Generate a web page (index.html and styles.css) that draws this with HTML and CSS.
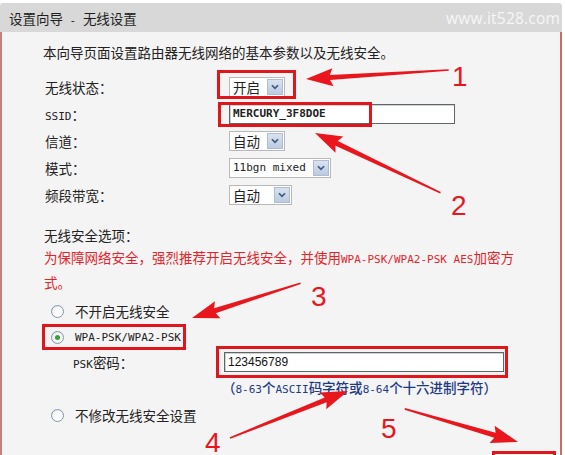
FILE: index.html
```html
<!DOCTYPE html>
<html lang="zh-CN">
<head>
  <meta charset="UTF-8">
  <meta name="viewport" content="width=device-width, initial-scale=1.0">
  <title>设置向导 - 无线设置</title>
  <link rel="stylesheet" href="styles.css">
</head>
<body>
  <div class="page">
    <div class="panel-head">
      <span class="title">设置向导<span class="en"> - </span>无线设置</span>
      <span class="mark">www.it528.com</span>
    </div>

    <div class="panel-body">
      <p class="intro">本向导页面设置路由器无线网络的基本参数以及无线安全。</p>

      <div class="rows">
        <div class="row">
          <span class="label">无线状态：</span>
          <div class="select w-state"><span class="val">开启</span><span class="btn"><svg viewBox="0 0 16 16"><polyline points="4.5,6 8,9.5 11.5,6"/></svg></span></div>
        </div>
        <div class="row">
          <span class="label"><span class="en">SSID</span>：</span>
          <div class="text-input w-ssid"><span class="en bold">MERCURY_3F8DOE</span></div>
        </div>
        <div class="row">
          <span class="label">信道：</span>
          <div class="select w-state"><span class="val">自动</span><span class="btn"><svg viewBox="0 0 16 16"><polyline points="4.5,6 8,9.5 11.5,6"/></svg></span></div>
        </div>
        <div class="row">
          <span class="label">模式：</span>
          <div class="select w-mode"><span class="val en">11bgn mixed</span><span class="btn"><svg viewBox="0 0 16 16"><polyline points="4.5,6 8,9.5 11.5,6"/></svg></span></div>
        </div>
        <div class="row">
          <span class="label">频段带宽：</span>
          <div class="select w-band"><span class="val">自动</span><span class="btn"><svg viewBox="0 0 16 16"><polyline points="4.5,6 8,9.5 11.5,6"/></svg></span></div>
        </div>
      </div>

      <p class="section">无线安全选项：</p>
      <p class="warn">为保障网络安全，强烈推荐开启无线安全，并使用<span class="en">WPA-PSK/WPA2-PSK AES</span>加密方式。</p>

      <div class="radio-row first"><span class="radio"></span>不开启无线安全</div>
      <div class="radio-row"><span class="radio checked"></span><span class="en">WPA-PSK/WPA2-PSK</span></div>
      <div class="psk-row">
        <span class="psk-label"><span class="en">PSK</span>密码：</span>
        <div class="text-input w-psk"><span class="num">123456789</span></div>
      </div>
      <p class="hint">（<span class="en">8-63</span>个<span class="en">ASCII</span>码字符或<span class="en">8-64</span>个十六进制字符）</p>
      <div class="radio-row last"><span class="radio"></span>不修改无线安全设置</div>
    </div>

    <!-- red marks drawn over the screenshot -->
    <svg class="marks" width="565" height="455" viewBox="0 0 565 455">
      <g class="boxes">
        <rect x="218.5" y="71.5" width="76" height="26"/>
        <rect x="219.5" y="103.5" width="151" height="22"/>
        <rect x="43.5" y="325.5" width="141" height="23"/>
        <rect x="217.5" y="347.5" width="289" height="29"/>
        <rect x="493.5" y="452.5" width="61" height="12"/>
      </g>
      <g class="arrows">
        <polygon transform="translate(306 79) rotate(-3.6)" points="0,0 27,-9 24,-2.6 143,-0.8 143,0.8 24,2.6 27,9"/>
        <polygon transform="translate(315 133) rotate(25.5)" points="0,0 27,-9 24,-2.6 139,-0.8 139,0.8 24,2.6 27,9"/>
        <polygon transform="translate(192 318) rotate(-17.8)" points="0,0 27,-9 24,-2.6 114,-0.8 114,0.8 24,2.6 27,9"/>
        <polygon transform="translate(348 391) rotate(158.3)" points="0,0 27,-9 24,-2.6 127,-0.8 127,0.8 24,2.6 27,9"/>
        <polygon transform="translate(518 442) rotate(-163.7)" points="0,0 27,-9 24,-2.6 118,-0.8 118,0.8 24,2.6 27,9"/>
      </g>
      <g class="nums">
        <text x="452" y="86">1</text>
        <text x="451" y="215">2</text>
        <text x="311" y="306">3</text>
        <text x="205" y="452">4</text>
        <text x="381" y="438">5</text>
      </g>
    </svg>
  </div>
</body>
</html>
```

FILE: styles.css
```css
body {
  margin: 0;
  background: #fff;
  font-family: "Noto Sans CJK SC", sans-serif;
  font-size: 13.5px;
  color: #222;
}
p {
  margin: 0;
}
.page {
  position: relative;
  width: 562px;
  padding-top: 3px;
}
.en {
  font-family: "DejaVu Sans Mono", monospace;
  font-size: 11px;
  line-height: 1;
}
.bold {
  font-weight: bold;
}

/* header */
.panel-head {
  height: 29px;
  display: flex;
  align-items: center;
  justify-content: space-between;
  padding: 0 2px 0 9px;
  background: #d8d8d8;
  border-radius: 3px 3px 0 0;
}
.title {
  color: #1e1e1e;
  white-space: pre;
}
.mark {
  font-family: "Open Sans", sans-serif;
  font-size: 15.5px;
  color: #f6f6f6;
  letter-spacing: 0.2px;
}

/* body */
.panel-body {
  background: #f5f4f4;
  border-left: 2px solid #c98078;
  border-right: 2px solid #d06a60;
  border-bottom: 2px solid #d9443c;
  padding: 10px 0 0 41px;
  height: 417px;
}
.intro {
  line-height: 20px;
}
.rows {
  margin-top: 11px;
}
.row {
  display: grid;
  grid-template-columns: 186px auto;
  align-items: center;
  justify-items: start;
  height: 27px;
}
.label {
  padding-left: 2px;
  line-height: 20px;
}

/* selects and inputs */
.select {
  box-sizing: border-box;
  height: 20px;
  display: flex;
  align-items: center;
  justify-content: space-between;
  background: #fff;
  border: 1px solid #b9b9b9;
  padding-left: 3px;
}
.select .val {
  line-height: 18px;
}
.select .btn {
  width: 16px;
  height: 16px;
  margin-right: 1px;
  box-sizing: border-box;
  background: linear-gradient(#d9e2ef, #bccbe0);
  border: 1px solid #aebdd3;
  display: flex;
}
.select svg {
  width: 14px;
  height: 14px;
  fill: none;
  stroke: #3e5a86;
  stroke-width: 2;
}
.w-state { width: 56px; }
.w-mode { width: 102px; }
.w-band { width: 63px; }

.text-input {
  box-sizing: border-box;
  height: 20px;
  display: flex;
  align-items: center;
  padding-left: 3px;
  background: #fff;
  border: 1px solid #5e6767;
  box-shadow: inset 1px 1px 0 #cfd3d3;
}
.w-ssid { width: 226px; }
.w-psk { width: 280px; }
.num {
  font-family: "Liberation Sans", sans-serif;
  font-size: 12px;
  color: #111;
}

/* security options */
.section {
  margin-top: 17px;
  line-height: 20px;
  padding-left: 1px;
}
.warn {
  width: 478px;
  line-height: 25px;
  color: #e3242b;
  padding-left: 1px;
}
.radio-row {
  height: 26px;
  display: flex;
  align-items: center;
  padding-left: 8px;
}
.radio-row.first {
  margin-top: 3px;
}
.radio-row.last {
  margin-top: 2px;
}
.radio {
  position: relative;
  width: 13px;
  height: 13px;
  box-sizing: border-box;
  border: 1px solid #8096ad;
  border-radius: 50%;
  background: radial-gradient(circle at 60% 60%, #fff 30%, #dde2e8);
  margin-right: 11px;
}
.radio.checked::after {
  content: "";
  position: absolute;
  left: 3px;
  top: 3px;
  width: 5px;
  height: 5px;
  border-radius: 50%;
  background: #33a336;
}
.psk-row {
  height: 24px;
  display: flex;
  align-items: center;
  padding-left: 30px;
}
.psk-label {
  width: 151px;
}
.hint {
  line-height: 26px;
  padding-left: 179px;
  color: #1d3a86;
  font-weight: 500;
}

/* annotation layer */
.marks {
  position: absolute;
  left: 0;
  top: 0;
  pointer-events: none;
}
.boxes rect {
  fill: none;
  stroke: #e0161d;
  stroke-width: 3;
}
.arrows polygon {
  fill: #e9161d;
}
.nums text {
  font-family: "Liberation Sans", sans-serif;
  font-size: 28px;
  fill: #e8161d;
}
```
